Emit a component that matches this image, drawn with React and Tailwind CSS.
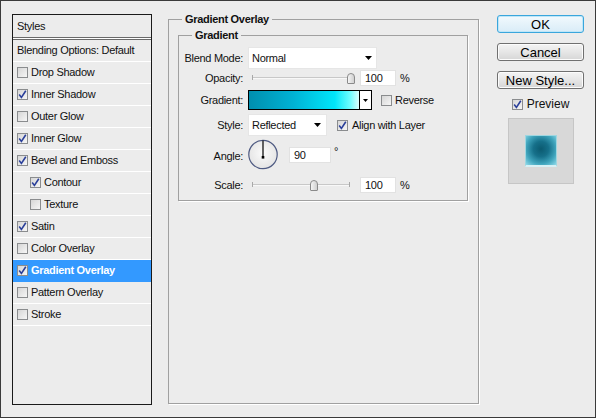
import React from "react";

function Check({ checked }) {
  return (
    <span className="w-[11px] h-[11px] shrink-0 border border-[#8a8c8e] bg-[linear-gradient(135deg,#d6d6d6,#f6f6f6)] flex items-center justify-center">
      {checked && (
        <svg width="9" height="9" viewBox="0 0 9 9">
          <path d="M1.2 4.6 L3.4 7.4 L7.8 0.8" stroke="#2a3f9a" strokeWidth="1.6" fill="none" />
        </svg>
      )}
    </span>
  );
}

function Arrow({ w = 7 }) {
  return (
    <svg width={w} height="4" viewBox="0 0 7 4" className="shrink-0">
      <path d="M0 0 H7 L3.5 4 Z" fill="#000" />
    </svg>
  );
}

function Slider({ thumb }) {
  return (
    <div className="relative w-[107px] h-full shrink-0">
      <div className="absolute left-[4px] w-[98px] top-1/2 -mt-[1px] h-[2px] bg-[#c8c8c8] border-b border-[#f8f8f8]" />
      <div className="absolute left-[4px] top-1/2 -mt-[3px] w-[1px] h-[5px] bg-[#a8a8a8]" />
      <div className="absolute left-[101px] top-1/2 -mt-[3px] w-[1px] h-[5px] bg-[#a8a8a8]" />
      <div
        className="absolute top-1/2 -mt-[5px] w-[8px] h-[11px] rounded-t-[4px] rounded-b-[1px] border border-[#8a8a8a] bg-[linear-gradient(to_right,#f4f4f4,#d0d0d0)]"
        style={{ left: thumb }}
      />
    </div>
  );
}

function NumInput({ value, w = "w-[36px]" }) {
  return (
    <div className={`${w} h-[16px] bg-white border border-[#e2e2e2] pl-[4px] flex items-center text-[11px] leading-none`}>
      {value}
    </div>
  );
}

function Label({ children }) {
  return <div className="w-[64px] text-right shrink-0 mr-[5px]">{children}</div>;
}

const items = [
  { t: "Drop Shadow" },
  { t: "Inner Shadow", c: true },
  { t: "Outer Glow" },
  { t: "Inner Glow", c: true },
  { t: "Bevel and Emboss", c: true },
  { t: "Contour", c: true, i: true },
  { t: "Texture", i: true },
  { t: "Satin", c: true },
  { t: "Color Overlay" },
  { t: "Gradient Overlay", c: true, s: true },
  { t: "Pattern Overlay" },
  { t: "Stroke" },
];

function Button({ children, focus }) {
  return (
    <div
      className={
        "w-[87px] h-[18px] rounded-[3px] flex items-center justify-center text-[13px] leading-none text-black tracking-normal " +
        (focus
          ? "border border-[#3aa6dc] bg-[linear-gradient(to_bottom,#f2f9fd,#d9ecf7)] shadow-[inset_0_0_0_1px_#bfe6f8]"
          : "border border-[#707070] bg-[linear-gradient(to_bottom,#f4f4f4,#e6e6e6_50%,#d6d6d6)] shadow-[inset_0_0_0_1px_#fcfcfc]")
      }
    >
      {children}
    </div>
  );
}

export default function App() {
  return (
    <div className="w-[596px] h-[418px] bg-[#ececec] border border-[#3a3a3a] flex items-start pl-[11px] pt-[13px] text-[11px] leading-[13px] tracking-[-0.3px] text-[#111] font-['Liberation_Sans',Arial,sans-serif]">
      {/* Left styles list */}
      <div className="w-[140px] h-[391px] border border-[#1a1a1a] flex flex-col shrink-0">
        <div className="h-[22px] flex items-center pl-[4px]">Styles</div>
        <div className="h-[3px] border-y border-[#6a6a6a] bg-white" />
        <div className="h-[22px] flex items-center pl-[4px] border-b border-white">Blending Options: Default</div>
        {items.map((it) => (
          <div
            key={it.t}
            className={
              "h-[22px] flex items-center gap-[3px] border-b " +
              (it.i ? "pl-[17px] " : "pl-[4px] ") +
              (it.s ? "bg-[#3399ff] border-[#3399ff] text-white font-bold" : "border-white")
            }
          >
            <Check checked={it.c} />
            <span>{it.t}</span>
          </div>
        ))}
      </div>

      {/* Middle group */}
      <fieldset className="ml-[16px] -mt-[1px] w-[311px] h-[391px] border border-[#a0a0a0] shadow-[1px_1px_0_#ffffff] shrink-0">
        <legend className="ml-[13px] px-[3px] font-bold leading-[13px]">Gradient Overlay</legend>
        <fieldset className="ml-[9px] mt-[3px] w-[290px] h-[172px] border border-[#a0a0a0] shadow-[1px_1px_0_#ffffff]">
          <legend className="ml-[13px] px-[3px] font-bold leading-[13px]">Gradient</legend>
          <div className="flex flex-col">
            {/* Blend mode */}
            <div className="mt-[5px] h-[22px] flex items-center">
              <Label>Blend Mode:</Label>
              <div className="w-[129px] h-[22px] bg-white border border-[#e6e6e6] flex items-center justify-between pl-[3px] pr-[4px]">
                <span>Normal</span>
                <Arrow />
              </div>
            </div>
            {/* Opacity */}
            <div className="h-[18px] flex items-center">
              <Label>Opacity:</Label>
              <Slider thumb={99} />
              <div className="ml-[5px]">
                <NumInput value="100" />
              </div>
              <span className="ml-[4px]">%</span>
            </div>
            {/* Gradient */}
            <div className="mt-[3px] h-[20px] flex items-center">
              <Label>Gradient:</Label>
              <div className="w-[124px] h-[20px] border border-black flex">
                <div className="flex-1 bg-[linear-gradient(to_right,#008eae,#00b2d4_40%,#00e6fa_78%,#6ffcff_92%,#dcffff)]" />
                <div className="w-[12px] border-l border-black bg-white flex items-center justify-center">
                  <svg width="5" height="3" viewBox="0 0 5 3"><path d="M0 0 H5 L2.5 3 Z" fill="#000" /></svg>
                </div>
              </div>
              <div className="ml-[9px] flex items-center gap-[3px]">
                <Check />
                <span>Reverse</span>
              </div>
            </div>
            {/* Style */}
            <div className="mt-[4px] h-[22px] flex items-center">
              <Label>Style:</Label>
              <div className="w-[79px] h-[22px] bg-white border border-[#e6e6e6] flex items-center justify-between pl-[3px] pr-[5px]">
                <span>Reflected</span>
                <Arrow />
              </div>
              <div className="ml-[10px] flex items-center gap-[4px]">
                <Check checked />
                <span>Align with Layer</span>
              </div>
            </div>
            {/* Angle */}
            <div className="mt-[3px] h-[31px] flex items-center">
              <Label>
                <span className="relative top-[2px]">Angle:</span>
              </Label>
              <svg width="30" height="31" viewBox="0 0 30 31" className="shrink-0">
                <defs>
                  <radialGradient id="dial" cx="50%" cy="45%" r="60%">
                    <stop offset="0%" stopColor="#fbfbfb" />
                    <stop offset="100%" stopColor="#e2e2e2" />
                  </radialGradient>
                </defs>
                <circle cx="15" cy="15.5" r="14.2" fill="url(#dial)" stroke="#4e5a82" strokeWidth="1.2" />
                <line x1="15" y1="1.5" x2="15" y2="18" stroke="#000" strokeWidth="1.2" />
                <rect x="13.7" y="17" width="2.6" height="2.6" fill="#000" />
              </svg>
              <div className="ml-[11px] mt-[1px]">
                <NumInput value="90" w="w-[42px]" />
              </div>
              <span className="ml-[3px] -mt-[6px]">°</span>
            </div>
            {/* Scale */}
            <div className="mt-[6px] h-[18px] flex items-center">
              <Label>Scale:</Label>
              <Slider thumb={62} />
              <div className="ml-[5px]">
                <NumInput value="100" />
              </div>
              <span className="ml-[4px]">%</span>
            </div>
          </div>
        </fieldset>
      </fieldset>

      {/* Right column */}
      <div className="ml-[18px] mt-[1px] w-[87px] flex flex-col items-center shrink-0">
        <Button focus>OK</Button>
        <div className="mt-[10px]">
          <Button>Cancel</Button>
        </div>
        <div className="mt-[10px]">
          <Button>New Style...</Button>
        </div>
        <div className="mt-[8px] h-[14px] flex items-center gap-[4px] text-[12px] tracking-normal">
          <Check checked />
          <span>Preview</span>
        </div>
        <div className="mt-[7px] w-[66px] h-[66px] bg-[#d8d8d8] border border-[#c6c6c6] flex items-center justify-center">
          <div className="w-[32px] h-[32px] border border-[#9ed6e0] border-b-2 border-b-[#d8f0f4] bg-[radial-gradient(circle_at_50%_45%,#0b5a70_0%,#16708a_35%,#3fa4bc_68%,#8fdaea_100%)]" />
        </div>
      </div>
    </div>
  );
}
